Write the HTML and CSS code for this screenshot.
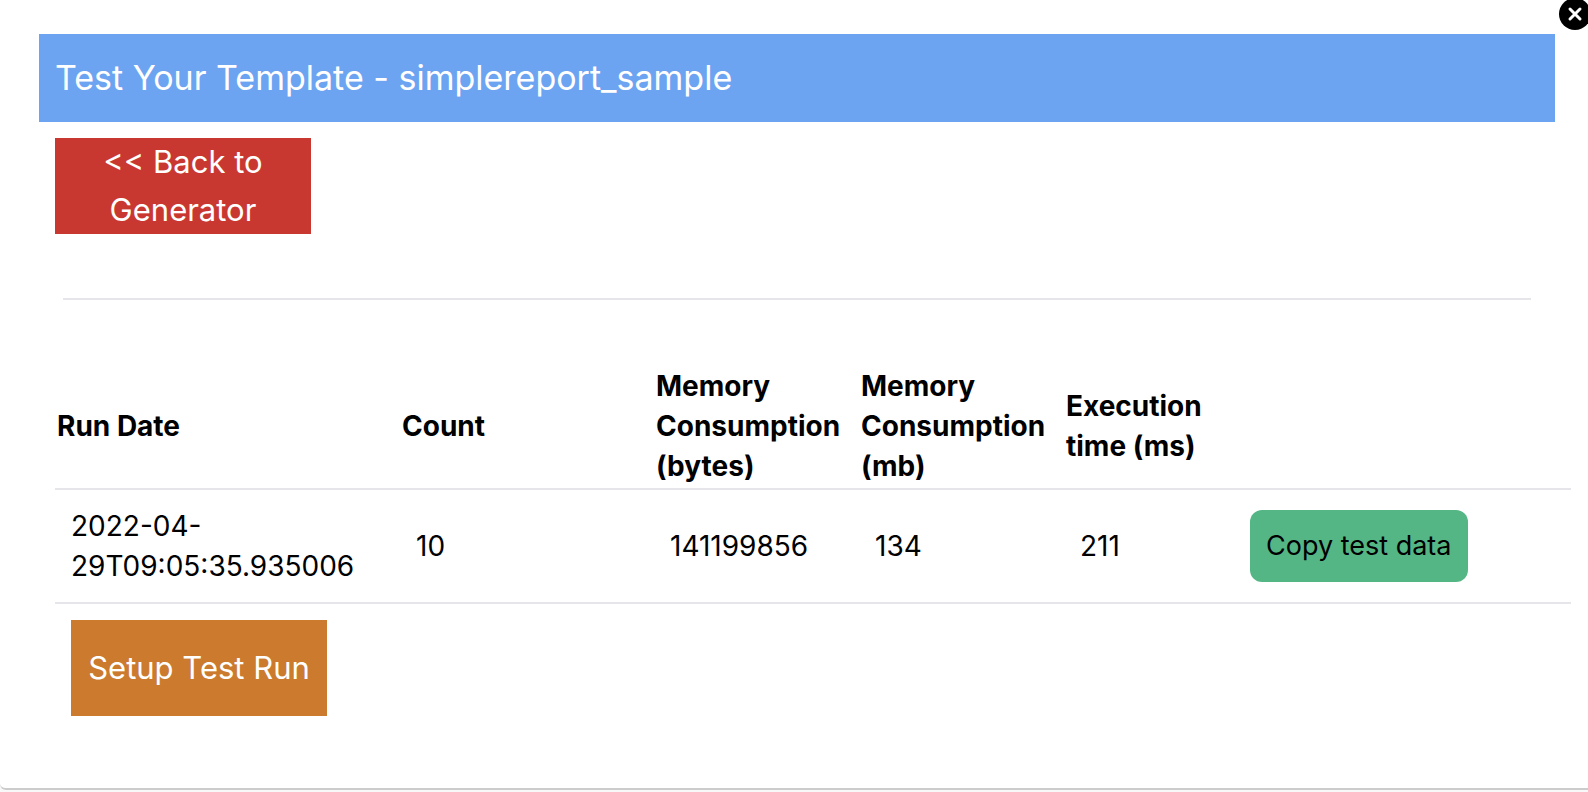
FILE: index.html
```html
<!DOCTYPE html>
<html lang="en">

<head>
    <meta charset="UTF-8">
    <meta name="viewport" content="width=device-width, initial-scale=1.0">
    <title>Test Your Template</title>
    <link rel="stylesheet" href="styles.css">
</head>

<body>
    <div class="modal">
        <button type="button" class="close" aria-label="Close">
            <svg viewBox="0 0 32 32" width="32" height="32">
                <path d="M11 11 L21 21 M21 11 L11 21" stroke="#fff" stroke-width="3" stroke-linecap="round" />
            </svg>
        </button>
        <h1 class="title">Test Your Template - simplereport_sample</h1>
        <button type="button" class="btn btn-back">&lt;&lt; Back to Generator</button>
        <hr class="divider">
        <div class="runs">
            <table class="runs-table">
                <colgroup>
                    <col class="col-date">
                    <col class="col-count">
                    <col class="col-memory">
                    <col class="col-memory">
                    <col class="col-time">
                    <col>
                </colgroup>
                <thead>
                    <tr>
                        <th>Run Date</th>
                        <th>Count</th>
                        <th>Memory Consumption (bytes)</th>
                        <th>Memory Consumption (mb)</th>
                        <th>Execution time (ms)</th>
                        <th></th>
                    </tr>
                </thead>
                <tbody>
                    <tr>
                        <td>2022-04-29T09:05:35.935006</td>
                        <td>10</td>
                        <td>141199856</td>
                        <td>134</td>
                        <td>211</td>
                        <td><button type="button" class="btn-copy">Copy test data</button></td>
                    </tr>
                </tbody>
            </table>
            <button type="button" class="btn btn-setup">Setup Test Run</button>
        </div>
    </div>
</body>

</html>
```
FILE: styles.css
```css
body {
    font-family: Inter, "Liberation Sans", sans-serif;
    font-size: 28px;
    line-height: 40px;
    color: #000;
    background-color: #f8f8f8;
    margin: 0;
}

.modal {
    position: relative;
    overflow: hidden;
    padding: 34px 33px 72px 39px;
    background-color: #fff;
    border-bottom: 2px solid #ccc;
    border-bottom-left-radius: 6px;
}

button {
    font-family: inherit;
    border: none;
    cursor: pointer;
}

.close {
    position: absolute;
    top: -2px;
    right: -3px;
    width: 32px;
    height: 32px;
    padding: 0;
    border-radius: 50%;
    background-color: #000;
}

.close svg {
    display: block;
}

.title {
    margin: 0;
    padding: 16px;
    font-size: 34px;
    font-weight: 400;
    line-height: 56px;
    color: #fff;
    background-color: #6ca4f2;
}

.btn {
    display: block;
    width: 256px;
    height: 96px;
    margin: 16px 16px 0;
    padding: 0 16px;
    font-size: 31px;
    line-height: 48px;
    color: #fff;
}

.btn-back {
    background-color: #c93830;
}

.btn-setup {
    background-color: #cb7a2e;
}

.divider {
    margin: 64px 24px;
    border: none;
    border-top: 2px solid #e5e5ea;
}

.runs {
    margin-left: 16px;
    margin-right: -16px;
}

.runs-table {
    width: 100%;
    table-layout: fixed;
    border-collapse: collapse;
}

.runs-table tr {
    border-bottom: 2px solid #e5e5ea;
}

.runs-table th {
    padding: 2px;
    font-weight: 700;
    text-align: left;
}

.runs-table td {
    padding: 16px;
}

.col-date {
    width: 345px;
}

.col-count {
    width: 254px;
}

.col-memory {
    width: 205px;
}

.col-time {
    width: 170px;
}

.btn-copy {
    display: block;
    margin: 4px 0;
    padding: 16px;
    font-size: 27px;
    line-height: 40px;
    color: #000;
    white-space: nowrap;
    background-color: #55b685;
    border-radius: 12px;
}
```
